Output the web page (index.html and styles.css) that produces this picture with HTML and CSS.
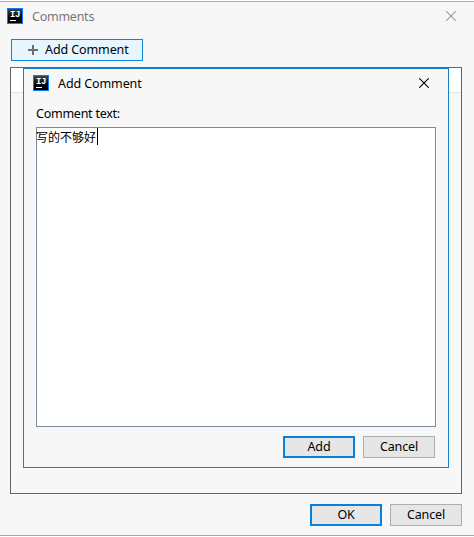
FILE: index.html
```html
<!DOCTYPE html>
<html lang="en">
<head>
<meta charset="utf-8">
<title>Comments</title>
<link rel="stylesheet" href="styles.css">
</head>
<body>
<main class="window">
  <header class="titlebar">
    <span class="logo"><b>IJ</b></span>
    <span class="title">Comments</span>
    <svg class="close" viewBox="0 0 10 10"><path d="M.3.3l9.4 9.4M9.7.3L.3 9.7"/></svg>
  </header>
  <button class="add-comment"><svg class="plus" viewBox="0 0 10 10"><path d="M5 0v10M0 5h10"/></svg><span>Add Comment</span></button>
  <section class="comments"><div class="list-header"></div></section>
  <footer class="actions">
    <button class="btn primary ok">OK</button>
    <button class="btn">Cancel</button>
  </footer>
</main>
<section class="dialog">
  <header class="titlebar">
    <span class="logo"><b>IJ</b></span>
    <span class="title">Add Comment</span>
    <svg class="close" viewBox="0 0 10 10"><path d="M.3.3l9.4 9.4M9.7.3L.3 9.7"/></svg>
  </header>
  <div class="label">Comment text:</div>
  <div class="editor"><span class="typed">写的不够好</span><i class="caret"></i></div>
  <footer class="actions">
    <button class="btn primary">Add</button>
    <button class="btn">Cancel</button>
  </footer>
</section>
</body>
</html>
```
FILE: styles.css
```css
* { box-sizing: border-box; }
body {
  margin: 0;
  width: 474px;
  height: 537px;
  overflow: hidden;
  background: #fff;
  color: #000;
  font: 12.5px/18px "Noto Sans", "Noto Sans CJK SC", sans-serif;
}
.window {
  height: 535px;
  margin-top: 1px;
  padding: 0 12px 0 10px;
  background: #f7f7f7;
  border-top: 1px solid #a9a9a9;
  border-bottom: 1px solid #a9a9a9;
}
.titlebar { display: flex; align-items: center; height: 28px; }
.window > .titlebar { margin: 0 -6px 0 -3px; color: #777; }
.logo {
  width: 16px;
  height: 16px;
  border: 1px solid #087cfa;
  background: linear-gradient(#444, #000 65%);
  color: #fff;
  font: bold 9px/9px "Liberation Mono", monospace;
  letter-spacing: -.4px;
  padding: 2px 0 0 2px;
}
.logo b { display: block; height: 9px; }
.logo::after { content: ""; display: block; width: 6px; height: 1px; background: #fff; }
.title { margin-left: 9px; padding-top: 2px; letter-spacing: -.1px; }
.window .title { letter-spacing: -.25px; }
.close {
  width: 10px;
  height: 10px;
  margin-left: auto;
  fill: none;
  stroke: #000;
  stroke-width: 1.1;
}
.window .close { margin-right: 12px; stroke: #999; }
button { font: inherit; color: inherit; padding: 0; border-radius: 0; }
.add-comment {
  display: flex;
  align-items: center;
  width: 132px;
  height: 22px;
  margin: 9px 0 6px 1px;
  padding-left: 16px;
  gap: 7px;
  letter-spacing: -.1px;
  background: #e5f6fe;
  border: 1px solid #0a84d8;
}
.plus { width: 10px; height: 10px; stroke: #6e6e6e; stroke-width: 2; }
.comments { height: 427px; border: 1px solid #646464; box-shadow: 0 1px #fff; }
.list-header { height: 25px; background: #fff; border-bottom: 1px solid #e5e5e5; }
.actions { display: flex; justify-content: flex-end; gap: 8px; }
.window .actions { margin-top: 10px; }
.btn {
  width: 72px;
  height: 22px;
  background: #e6e6e6;
  border: 1px solid #adadad;
  line-height: 18px;
  letter-spacing: -.15px;
}
.primary { border: 2px solid #0583dc; }
.dialog {
  position: absolute;
  left: 23px;
  top: 68px;
  width: 426px;
  height: 400px;
  padding: 0 12px;
  background: #f7f7f7;
  border: 1px solid #1b7fcb;
}
.dialog .titlebar { margin: 0 7px 0 -3px; }
.label { margin: 8px 0 4px; letter-spacing: -.25px; }
.editor {
  display: flex;
  height: 300px;
  background: #fff;
  border: 1px solid #7a8b9c;
}
.typed { margin-left: -1px; font: 12px/18px "Noto Sans CJK SC", sans-serif; }
.caret { width: 1px; height: 17px; margin: 0 0 0 1px; background: #000; }
.dialog .actions { margin: 9px 1px 0 0; }
```
